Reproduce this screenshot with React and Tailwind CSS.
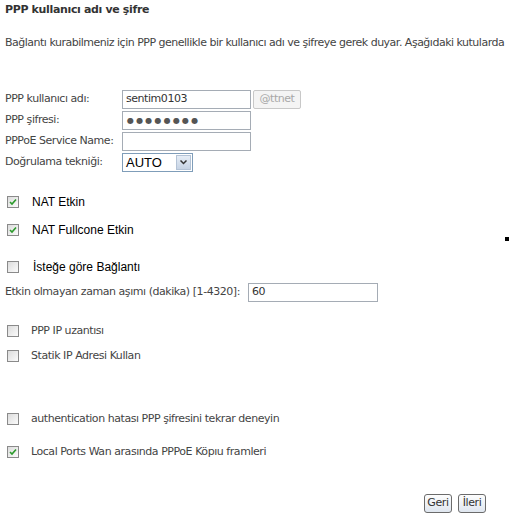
export default function App() {
  const tah = { fontFamily: '"DejaVu Sans", Verdana, sans-serif' };
  const Box = ({ checked }) => (
    <span className="inline-flex items-center justify-center w-[12px] h-[12px] border border-[#8a8a8a] bg-gradient-to-br from-[#dcdcdc] to-[#fbfbfb]">
      {checked && (
        <svg width="8" height="8" viewBox="0 0 8 8">
          <path d="M1 4 L3 6 L7 1.5" stroke="#2b9a2b" strokeWidth="1.6" fill="none" />
        </svg>
      )}
    </span>
  );
  return (
    <div className="w-[510px] h-[517px] bg-white text-[#333] overflow-hidden relative" style={{ ...tah }}>
      <div className="pl-[5px] pt-[3px]">
        <div className="text-[11px] font-bold leading-[14px] tracking-[-0.35px] text-[#333]">PPP kullanıcı adı ve şifre</div>
        <div className="mt-[19px] text-[11px] leading-[14px] whitespace-nowrap tracking-[-0.5px] text-[#444]">
          Bağlantı kurabilmeniz için PPP genellikle bir kullanıcı adı ve şifreye gerek duyar. Aşağıdaki kutularda
        </div>
        <div className="mt-[39px] flex flex-col gap-[2px] text-[11px] tracking-[-0.45px] text-[#444]">
          <div className="flex items-center h-[20px]">
            <span className="w-[117px]">PPP kullanıcı adı:</span>
            <div className="w-[129px] h-[19px] border border-[#a5acb5] flex items-center px-[3px] text-[#333]">sentim0103</div>
            <div className="ml-[2px] w-[48px] h-[19px] border border-[#c8c8c8] rounded-[2px] bg-[#f4f4f4] flex items-center justify-center text-[#a8a8a8]">@ttnet</div>
          </div>
          <div className="flex items-center h-[19px]">
            <span className="w-[117px]">PPP şifresi:</span>
            <div className="w-[129px] h-[19px] border border-[#a5acb5] flex items-center px-[4px] text-[#555] text-[8px] tracking-[2.2px]">●●●●●●●●</div>
          </div>
          <div className="flex items-center h-[19px]">
            <span className="w-[117px]">PPPoE Service Name:</span>
            <div className="w-[129px] h-[19px] border border-[#a5acb5]"></div>
          </div>
          <div className="flex items-center h-[19px]">
            <span className="w-[117px]">Doğrulama tekniği:</span>
            <div className="w-[71px] h-[19px] border border-[#7f9db9] flex items-center justify-between pl-[3px] pr-[1px] text-[13px] text-black tracking-normal" style={{ fontFamily: '"Liberation Sans", Arial, sans-serif' }}>
              <span>AUTO</span>
              <span className="w-[15px] h-[15px] border border-[#b4c3d6] bg-gradient-to-b from-[#e6edf6] to-[#c6d3e4] flex items-center justify-center">
                <svg width="7" height="5" viewBox="0 0 7 5"><path d="M0.5 0.5 L3.5 3.5 L6.5 0.5" stroke="#333" strokeWidth="1.5" fill="none" /></svg>
              </span>
            </div>
          </div>
        </div>

        <div className="mt-[22px] flex flex-col text-[12px] text-black" style={{ fontFamily: '"Liberation Sans", Arial, sans-serif' }}>
          <div className="flex items-center h-[16px] pl-[2px]"><Box checked /><span className="ml-[13px]">NAT Etkin</span></div>
          <div className="flex items-center h-[16px] mt-[12px] pl-[2px]"><Box checked /><span className="ml-[13px]">NAT Fullcone Etkin</span></div>
          <div className="flex items-center h-[16px] mt-[21px] pl-[2px]"><Box /><span className="ml-[14px]">İsteğe göre Bağlantı</span></div>
        </div>

        <div className="mt-[8px] flex items-center text-[11px] tracking-[-0.45px] text-[#444]">
          <span className="w-[243px]">Etkin olmayan zaman aşımı (dakika) [1-4320]:</span>
          <div className="w-[130px] h-[19px] border border-[#a5acb5] flex items-center px-[3px] text-[#333]">60</div>
        </div>

        <div className="mt-[21px] flex flex-col text-[11px] tracking-[-0.45px] text-[#444]">
          <div className="flex items-center h-[16px] pl-[2px]"><Box /><span className="ml-[12px]">PPP IP uzantısı</span></div>
          <div className="flex items-center h-[16px] mt-[9px] pl-[2px]"><Box /><span className="ml-[12px]">Statik IP Adresi Kullan</span></div>
          <div className="flex items-center h-[16px] mt-[47px] pl-[2px]"><Box /><span className="ml-[12px]">authentication hatası PPP şifresini tekrar deneyin</span></div>
          <div className="flex items-center h-[16px] mt-[17px] pl-[2px]"><Box checked /><span className="ml-[12px]">Local Ports Wan arasında PPPoE Köpıu framleri</span></div>
        </div>
      </div>

      <div className="absolute left-[424px] top-[494px] flex gap-[6px] text-[11px] text-[#333] tracking-[-0.4px]">
        <div className="w-[28px] h-[19px] border border-[#6b6b6b] rounded-[3px] bg-gradient-to-b from-[#fdfdfd] to-[#dfe6ef] flex items-center justify-center">Geri</div>
        <div className="w-[28px] h-[19px] border border-[#6b6b6b] rounded-[3px] bg-gradient-to-b from-[#fdfdfd] to-[#dfe6ef] flex items-center justify-center">İleri</div>
      </div>
      <div className="absolute left-[505px] top-[237px] w-[4px] h-[4px] bg-black"></div>
    </div>
  );
}
